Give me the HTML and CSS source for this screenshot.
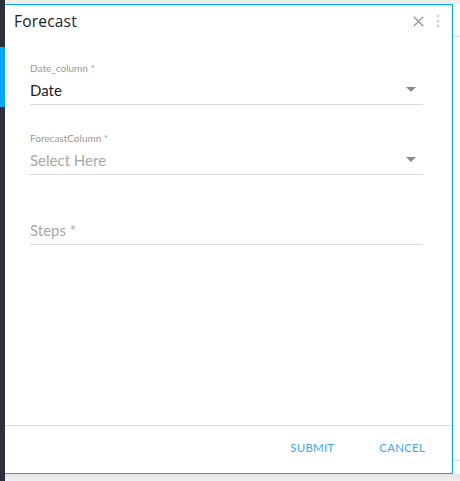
FILE: index.html
```html
<!DOCTYPE html>
<html>
<head>
<meta charset="utf-8">
<link rel="stylesheet" href="styles.css">
</head>
<body>
<div class="app">
  <aside class="sidebar"><div class="sidebar-active"></div></aside>
  <main class="backdrop">
    <div class="top-strip"></div>
    <div class="stage">
      <section class="dialog">
        <header class="dialog-head">
          <h1 class="dialog-title">Forecast</h1>
          <div class="head-actions">
            <svg class="icon-close" width="11" height="11" viewBox="0 0 11 11"><path d="M0.8 0.8L10.2 10.2M10.2 0.8L0.8 10.2" stroke="#9e9e9e" stroke-width="1.5" fill="none"/></svg>
            <svg class="icon-more" width="4" height="14" viewBox="0 0 4 14"><circle cx="2" cy="2" r="1.5" fill="#d0d0d0"/><circle cx="2" cy="7" r="1.5" fill="#d0d0d0"/><circle cx="2" cy="12" r="1.5" fill="#d0d0d0"/></svg>
          </div>
        </header>
        <div class="dialog-body">
          <div class="field">
            <div class="field-label">Date_column *</div>
            <div class="field-input">
              <span class="value">Date</span>
              <span class="caret"></span>
            </div>
          </div>
          <div class="field">
            <div class="field-label">ForecastColumn *</div>
            <div class="field-input">
              <span class="placeholder">Select Here</span>
              <span class="caret"></span>
            </div>
          </div>
          <div class="field">
            <div class="field-label">&nbsp;</div>
            <div class="field-input">
              <span class="placeholder">Steps *</span>
            </div>
          </div>
        </div>
        <footer class="dialog-foot">
          <button class="btn">SUBMIT</button>
          <button class="btn">CANCEL</button>
        </footer>
      </section>
      <div class="right-strip"><div class="right-line"></div><div class="right-line low"></div></div>
    </div>
    <div class="bottom-strip"></div>
  </main>
</div>
</body>
</html>
```
FILE: styles.css
```css
* { box-sizing: border-box; }
html, body { margin: 0; padding: 0; }
body {
  width: 460px;
  height: 481px;
  overflow: hidden;
  font-family: "Source Sans Pro", Lato, "Noto Sans", sans-serif;
  background: #f4f4f4;
}
.app {
  display: flex;
  height: 481px;
}
.sidebar {
  width: 5px;
  flex: none;
  background: #2b2f39;
  padding-top: 47px;
}
.sidebar-active {
  height: 60px;
  background: #03a9f4;
}
.backdrop {
  flex: 1;
  display: flex;
  flex-direction: column;
  background: #f7f7f7;
}
.top-strip {
  height: 4px;
  background: #eeeeee;
}
.stage {
  display: flex;
}
.dialog {
  width: 448px;
  height: 470px;
  flex: none;
  background: #fff;
  border-top: 1px solid #03a9f4;
  border-right: 1px solid #03a9f4;
  border-bottom: 1px solid #03a9f4;
  display: flex;
  flex-direction: column;
}
.right-strip {
  flex: 1;
  background: #fcfcfc;
  padding-top: 32px;
  display: flex;
  flex-direction: column;
}
.right-line {
  height: 1px;
  background: #dedede;
}
.right-line.low {
  margin-top: 423px;
}
.bottom-strip {
  flex: 1;
  background: linear-gradient(#e4e4e4, #efefef);
}
.dialog-head {
  display: flex;
  align-items: center;
  justify-content: space-between;
  height: 32px;
  padding: 0 12px 0 9px;
}
.dialog-title {
  margin: 0;
  font-family: "Open Sans", Lato, sans-serif;
  font-size: 15.5px;
  letter-spacing: 0.2px;
  font-weight: 400;
  color: #222;
  padding-bottom: 1px;
}
.head-actions {
  display: flex;
  align-items: center;
  gap: 12px;
}
.icon-close { display: block; }
.icon-more { display: block; }
.dialog-body {
  flex: 1;
  padding: 25px 29px 0 25px;
}
.field {
  margin-bottom: 27px;
}
.field-label {
  font-size: 10px;
  line-height: 12px;
  color: #9a9a9a;
  margin-bottom: 4px;
}
.field-input {
  display: flex;
  align-items: center;
  justify-content: space-between;
  height: 27px;
  border-bottom: 1px solid #dcdcdc;
  padding: 0 7px 3px 0;
}
.value {
  font-size: 15px;
  color: #222;
}
.placeholder {
  font-size: 15px;
  color: #a8a8a8;
}
.caret {
  width: 0;
  height: 0;
  border-left: 5px solid transparent;
  border-right: 5px solid transparent;
  border-top: 5px solid #8a8a8a;
}
.dialog-foot {
  height: 48px;
  border-top: 1px solid #dddddd;
  display: flex;
  justify-content: flex-end;
  align-items: center;
  gap: 35px;
  padding: 0 22px 4px 0;
}
.btn {
  background: none;
  border: none;
  padding: 0 5px;
  font-family: inherit;
  font-size: 11.5px;
  letter-spacing: 0.2px;
  color: #42a5f5;
  cursor: pointer;
}
```
